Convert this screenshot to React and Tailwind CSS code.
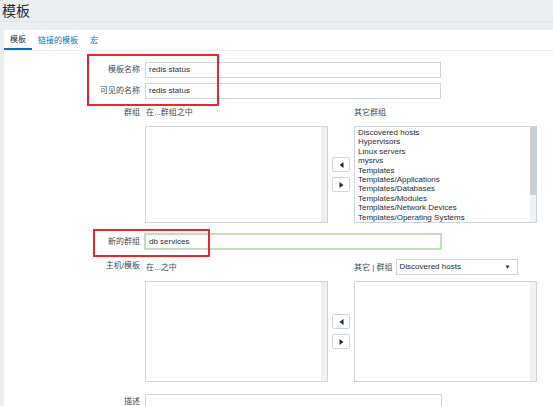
import React from "react";

function Arrow({ dir }) {
  return (
    <svg width="5" height="6" viewBox="0 0 5 6">
      {dir === "left" ? (
        <polygon points="4.5,0 4.5,6 0.5,3" fill="#1f2c33" />
      ) : (
        <polygon points="0.5,0 0.5,6 4.5,3" fill="#1f2c33" />
      )}
    </svg>
  );
}

function Btn({ dir }) {
  return (
    <div className="w-[18px] h-[15px] border border-[#cdd5da] rounded-[2px] bg-white flex items-center justify-center">
      <Arrow dir={dir} />
    </div>
  );
}

function Listbox({ items = [], thumb = false }) {
  return (
    <div className="w-[183px] h-full border border-[#cdd5da] flex bg-white">
      <div className="flex-1 pl-[3px] pt-[1px] overflow-hidden">
        {items.map((t) => (
          <div key={t} className="leading-[9.4px] text-[8px] text-[#1f2c33] whitespace-nowrap">
            {t}
          </div>
        ))}
      </div>
      <div className="w-[6px] h-full bg-[#eef0f1]">
        {thumb && <div className="h-[68px] bg-[#c7cfd4]" />}
      </div>
    </div>
  );
}

function Label({ children, className = "" }) {
  return (
    <div className={"w-[136px] shrink-0 text-right text-[8px] leading-[10px] text-[#3d4a51] " + className}>
      {children}
    </div>
  );
}

const groups = [
  "Discovered hosts",
  "Hypervisors",
  "Linux servers",
  "mysrvs",
  "Templates",
  "Templates/Applications",
  "Templates/Databases",
  "Templates/Modules",
  "Templates/Network Devices",
  "Templates/Operating Systems",
];

export default function App() {
  return (
    <div className="w-[553px] h-[406px] overflow-hidden bg-[#ebeef0] font-['Liberation_Sans','Noto_Sans_CJK_SC',sans-serif] text-[#1f2c33]">
      <div className="h-[22px] border-b border-[#e1e5e8] pl-[2px] text-[14px] leading-[22px] text-[#1f2c33]">
        模板
      </div>
      <div className="mt-[8px] ml-[4px] h-[400px] bg-white">
        {/* tabs */}
        <div className="flex h-[21px] border-b border-[#ebeef0] text-[8px] leading-[10px]">
          <div className="px-[6px] pt-[2px] flex items-center border-b-2 border-[#0275b8] text-[#1f2c33]">模板</div>
          <div className="px-[6px] pt-[2px] flex items-center text-[#0275b8]">链接的模板</div>
          <div className="px-[6px] pt-[2px] flex items-center text-[#0275b8]">宏</div>
        </div>

        {/* name rows */}
        <div className="relative mt-[11px]">
          <div className="flex items-center">
            <Label>模板名称</Label>
            <div className="ml-[5px] w-[296px] h-[16px] border border-[#cdd5da] pl-[3px] flex items-center text-[8px] text-[#1f2c33]">
              redis status
            </div>
          </div>
          <div className="flex items-center mt-[5px]">
            <Label>可见的名称</Label>
            <div className="ml-[5px] w-[296px] h-[16px] border border-[#cdd5da] pl-[3px] flex items-center text-[8px] text-[#1f2c33]">
              redis status
            </div>
          </div>
          <div className="absolute left-[83px] top-[-8px] w-[132px] h-[52px] border-2 border-[#e8262b] pointer-events-none" />
        </div>

        {/* groups */}
        <div className="flex mt-[9px]">
          <Label>群组</Label>
          <div className="ml-[5px]">
            <div className="flex h-[10px] text-[8px] leading-[10px] text-[#3d4a51]">
              <div className="w-[209px] pl-[1px]">在...群组之中</div>
              <div>其它群组</div>
            </div>
            <div className="flex mt-[8px] h-[97px] gap-[4px]">
              <Listbox />
              <div className="w-[18px] flex flex-col justify-center gap-[5px]">
                <Btn dir="left" />
                <Btn dir="right" />
              </div>
              <Listbox items={groups} thumb />
            </div>
          </div>
        </div>

        {/* new group */}
        <div className="relative flex items-center mt-[10px]">
          <Label>新的群组</Label>
          <div className="ml-[4px] w-[298px] h-[17px] border-2 border-[#bde0b6] pl-[3px] flex items-center text-[8px] text-[#1f2c33]">
            db services
          </div>
          <div className="absolute left-[89px] top-[-4px] w-[117px] h-[28px] border-2 border-[#e8262b] pointer-events-none" />
        </div>

        {/* hosts */}
        <div className="flex mt-[9px]">
          <Label className="pt-[2px]">主机/模板</Label>
          <div className="ml-[5px]">
            <div className="flex h-[16px] items-center text-[8px] leading-[10px] text-[#3d4a51]">
              <div className="w-[209px] pl-[1px] pt-[2px]">在...之中</div>
              <div className="pt-[1px]">其它 | 群组</div>
              <div className="ml-[3px] w-[122px] h-[16px] border border-[#cdd5da] pl-[3px] pr-[6px] flex items-center justify-between text-[#1f2c33]">
                <span>Discovered hosts</span>
                <span className="text-[6px]">▼</span>
              </div>
            </div>
            <div className="flex mt-[6px] h-[101px] gap-[4px]">
              <Listbox />
              <div className="w-[18px] flex flex-col justify-center gap-[5px]">
                <Btn dir="left" />
                <Btn dir="right" />
              </div>
              <Listbox />
            </div>
          </div>
        </div>

        {/* description */}
        <div className="flex mt-[12px]">
          <Label className="pt-[3px]">描述</Label>
          <div className="ml-[5px] w-[297px] h-[40px] border border-[#cdd5da]" />
        </div>
      </div>
    </div>
  );
}
